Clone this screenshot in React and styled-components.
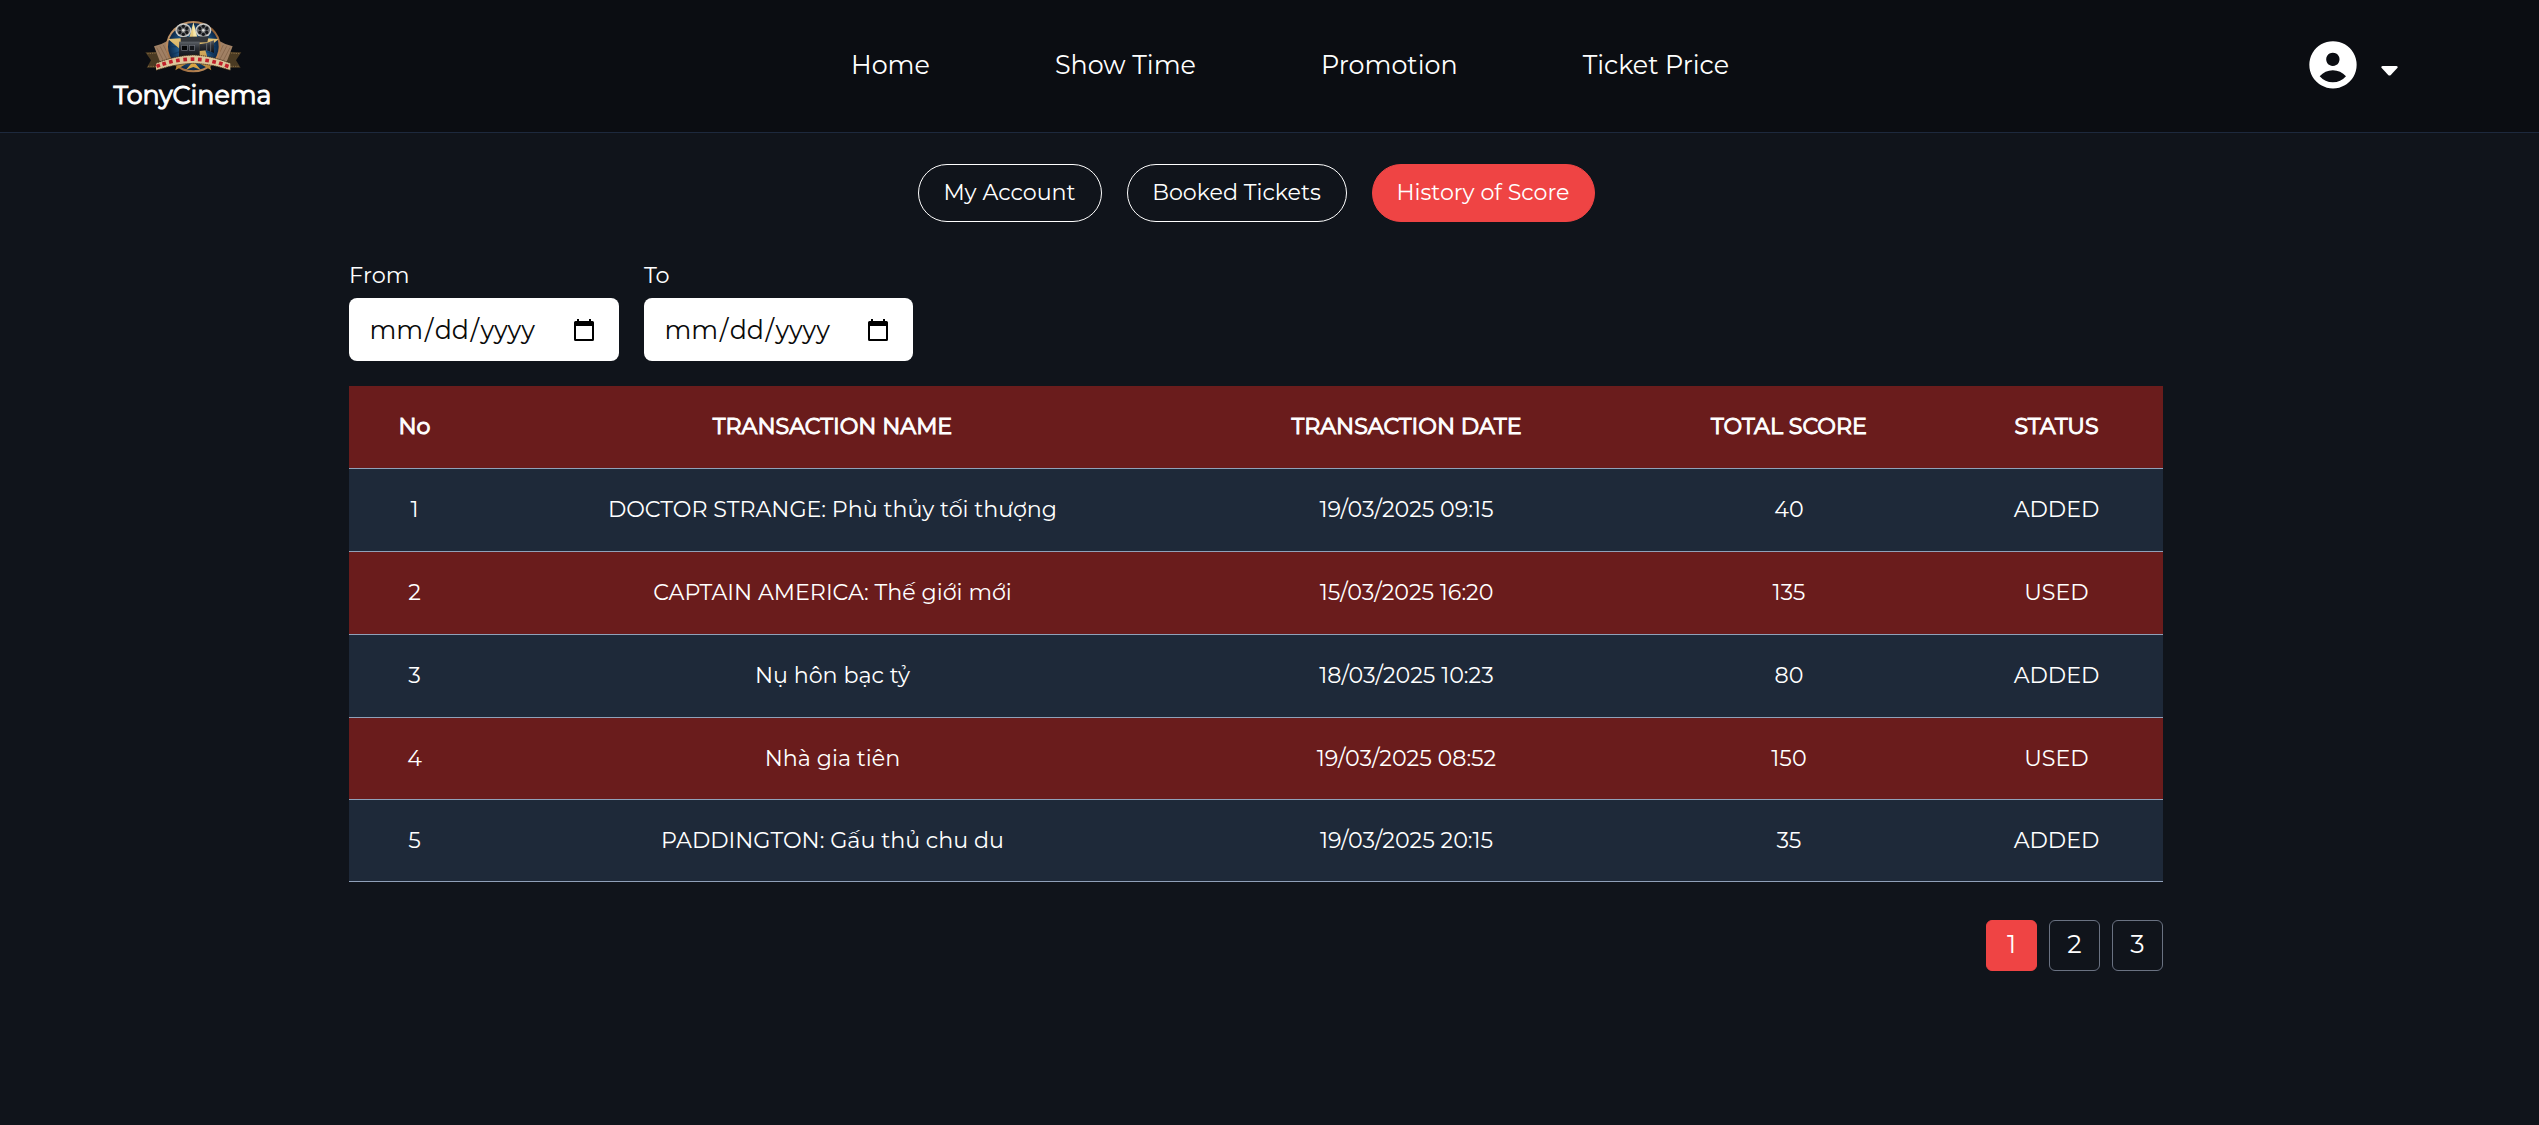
import React from 'react';
import styled, { createGlobalStyle, css } from 'styled-components';

const GlobalStyle = createGlobalStyle`
  *, *::before, *::after { box-sizing: border-box; }
  html, body, #root { height: 100%; }
  body {
    margin: 0;
    overflow: hidden;
    background: #10141b;
    color: #fff;
    font-family: Montserrat, Inter, "Noto Sans", sans-serif;
    font-weight: 400;
  }
  button { font: inherit; color: inherit; background: none; padding: 0; }
  h1 { margin: 0; }
`;

const emboldened = css`
  font-weight: 400;
  -webkit-text-stroke: 1px currentColor;
`;

const Page = styled.div`
  height: 100%;
  display: flex;
  flex-direction: column;
`;

const Header = styled.header`
  flex: none;
  height: 133px;
  padding: 0 141px 0 114px;
  display: flex;
  justify-content: space-between;
  background: #0b0d12;
  border-bottom: 1px solid #1d293d;
`;

const Brand = styled.div`
  width: 157px;
  padding-top: 15px;
  display: flex;
  flex-direction: column;
  align-items: center;
`;

const BrandName = styled.h1`
  ${emboldened}
  margin-top: 1px;
  font-size: 25.3px;
  line-height: 30px;
  white-space: nowrap;
`;

const Nav = styled.nav`
  width: 878px;
  display: flex;
  align-items: center;
  justify-content: space-between;
`;

const NavLink = styled.a`
  font-size: 25.4px;
  line-height: 36px;
  color: #fff;
  padding-bottom: 2px;
  white-space: nowrap;
`;

const UserMenu = styled.div`
  width: 89px;
  display: flex;
  justify-content: space-between;
  padding-top: 41px;
`;

const Caret = styled.svg`
  margin-top: 25px;
`;

const Main = styled.main`
  width: 1814px;
  margin-left: 349px;
  padding-top: 31px;
  display: flex;
  flex-direction: column;
`;

const Tabs = styled.div`
  display: flex;
  justify-content: center;
  gap: 25px;
`;

const Tab = styled.button`
  width: ${({ $width }) => $width}px;
  height: 58px;
  border-radius: 29px;
  border: 1px solid ${({ $active }) => ($active ? '#ef4444' : '#fff')};
  background: ${({ $active }) => ($active ? '#ef4444' : 'transparent')};
  font-size: 22.2px;
  line-height: 32px;
  white-space: nowrap;
`;

const Filters = styled.div`
  display: flex;
  gap: 25px;
  margin-top: 36px;
`;

const Field = styled.div`
  width: ${({ $width }) => $width}px;
`;

const Label = styled.label`
  display: block;
  height: 40px;
  font-size: 22.4px;
  line-height: 35px;
`;

const DateInput = styled.div`
  height: 63px;
  padding: 0 25px 0 19px;
  display: flex;
  align-items: center;
  justify-content: space-between;
  background: #fff;
  color: #0a0a0a;
  border-radius: 8px;
  font-size: 25.3px;
  line-height: 32px;
  font-weight: 400;
`;

const DatePart = styled.span`
  padding: 0 1.5px;
`;

const Table = styled.table`
  width: 1814px;
  margin-top: 25px;
  table-layout: fixed;
  border-collapse: separate;
  border-spacing: 0;
  font-size: 22.2px;
  line-height: 32px;
`;

const Row = styled.tr`
  height: ${({ $height }) => $height}px;
  background: ${({ $red }) => ($red ? '#6a1c1c' : '#1e2939')};
`;

const Cell = styled.td`
  padding: 0;
  text-align: center;
  vertical-align: middle;
  border-bottom: 1px solid #90a1b9;
`;

const HeadCell = styled(Cell).attrs({ as: 'th' })`
  ${emboldened}
`;

const Pagination = styled.div`
  margin-top: 38px;
  display: flex;
  justify-content: flex-end;
  gap: 12px;
`;

const PageButton = styled.button`
  width: 51px;
  height: 51px;
  border-radius: 6px;
  border: 1px solid ${({ $active }) => ($active ? '#ef4444' : '#6a7282')};
  background: ${({ $active }) => ($active ? '#ef4444' : 'transparent')};
  font-size: 25.3px;
  line-height: 34px;
  padding-bottom: 3px;
`;

const sprockets = [
  [54, 152, -20], [72, 146, -18], [92, 140, -14], [113, 136, -10], [135, 133, -5],
  [157, 132, 0], [179, 133, 5], [201, 136, 9], [222, 140, 14], [242, 145, 18], [260, 152, 20],
];

function Reel({ x }) {
  return (
    <g transform={`translate(${x} 46)`}>
      <ellipse rx="24" ry="21" fill="#cfcfcb" />
      <ellipse rx="20" ry="17" fill="#6c6e71" />
      {[0, 60, 120, 180, 240, 300].map((angle) => (
        <circle key={angle} r="5" cy="-12" transform={`rotate(${angle})`} fill="#15171a" />
      ))}
      <circle r="4" fill="#e0e0dc" />
    </g>
  );
}

function Emblem() {
  return (
    <svg width="106" height="64" viewBox="0 0 318 192">
      <defs>
        <radialGradient id="sky">
          <stop offset="0" stopColor="#4b96c6" />
          <stop offset="0.6" stopColor="#1f5888" />
          <stop offset="1" stopColor="#0b2747" />
        </radialGradient>
        <linearGradient id="rim" x1="0" y1="0" x2="1" y2="1">
          <stop offset="0" stopColor="#ddb184" />
          <stop offset="0.5" stopColor="#8d5c32" />
          <stop offset="1" stopColor="#d3a06a" />
        </linearGradient>
        <linearGradient id="gold" x1="0" y1="0" x2="0" y2="1">
          <stop offset="0" stopColor="#f7e39a" />
          <stop offset="1" stopColor="#b98332" />
        </linearGradient>
        <linearGradient id="metal" x1="0" y1="0" x2="0" y2="1">
          <stop offset="0" stopColor="#5d6268" />
          <stop offset="0.4" stopColor="#2c3036" />
          <stop offset="1" stopColor="#0e1116" />
        </linearGradient>
      </defs>
      <path d="M16 112L58 110L78 158L20 158L33 136Z" fill="#4a3a22" />
      <path d="M304 112L262 110L242 158L302 158L288 136Z" fill="#4a3a22" />
      <path d="M22 116L50 114M24 154L52 154M298 116L270 114M296 154L266 154" stroke="#a48351" strokeWidth="2" strokeDasharray="4 3" />
      <path d="M42 94Q62 90 82 78L96 130L60 140Z" fill="#a08064" />
      <path d="M278 94Q258 90 238 78L224 130L260 140Z" fill="#a08064" />
      <path d="M50 98L72 140M60 94L82 136M70 90L90 130M270 98L248 140M260 94L238 136M250 90L230 130" stroke="#7d5e44" strokeWidth="2" />
      <ellipse cx="160" cy="95" rx="82" ry="77" fill="url(#rim)" />
      <ellipse cx="160" cy="95" rx="76" ry="71" fill="url(#sky)" />
      <g stroke="#0d3157" strokeWidth="4" opacity="0.55">
        {[10, 30, 50, 70, 90, 110, 130, 150, 170].map((angle) => (
          <path key={angle} d="M160 26V164" transform={`rotate(${angle} 160 95)`} />
        ))}
      </g>
      <path d="M160 22L172 68L236 72L196 106L214 166L160 134L106 166L124 106L84 72L148 68Z" fill="url(#gold)" />
      <path d="M160 22L160 95L172 68Z" fill="#fff4bd" opacity="0.7" />
      <Reel x={130} />
      <Reel x={190} />
      <path d="M122 66L206 64L202 82L122 84Z" fill="#33373c" />
      <rect x="117" y="80" width="62" height="48" fill="url(#metal)" />
      <rect x="125" y="91" width="17" height="15" fill="#050608" stroke="#737780" strokeWidth="2" />
      <rect x="148" y="91" width="16" height="15" fill="#14171b" stroke="#737780" strokeWidth="2" />
      <path d="M178 88L200 84L222 76L222 114L200 106L178 108Z" fill="url(#metal)" />
      <path d="M200 85V106M212 81V110" stroke="#7d8289" strokeWidth="2" />
      <path d="M160 136L168 148L182 164L160 156L138 164L152 148Z" fill="#d7a342" />
      <path d="M48 145Q104 122 160 120Q216 122 271 145V166Q216 147 160 145Q104 147 48 166Z" fill="#dcc69a" />
      <path d="M48 145Q104 122 160 120Q216 122 271 145M48 166Q104 147 160 145Q216 147 271 166" fill="none" stroke="#49331c" strokeWidth="3" strokeDasharray="4 2" />
      {sprockets.map(([x, y, angle]) => (
        <rect key={x} x={x - 5} y={y - 5} width="11" height="11" fill="#c01f2a" transform={`rotate(${angle} ${x} ${y})`} />
      ))}
    </svg>
  );
}

function Avatar() {
  return (
    <svg width="48" height="48" viewBox="0 0 144 144">
      <path
        fill="#fff"
        fillRule="evenodd"
        d="M72 0.500A71 71 0 1 1 71.900 0.500ZM71.500 35A20 20 0 1 0 71.600 35ZM32 106Q48 88 71.500 88Q95 88 111 106Q95 124 71.500 124Q48 124 32 106Z"
      />
    </svg>
  );
}

function CalendarIcon() {
  return (
    <svg width="20" height="22" viewBox="0 0 20 22">
      <path
        fill="#000"
        fillRule="evenodd"
        d="M3 0H5V2H15V0H17V2H18.500Q20 2 20 3.500V20.500Q20 22 18.500 22H1.500Q0 22 0 20.500V3.500Q0 2 1.500 2H3ZM2 7V20H18V7Z"
      />
    </svg>
  );
}

const links = ['Home', 'Show Time', 'Promotion', 'Ticket Price'];
const tabs = [['My Account', 184], ['Booked Tickets', 220], ['History of Score', 223]];
const fields = [['From', 270], ['To', 269]];
const columns = [['No', 131], ['TRANSACTION NAME', 705], ['TRANSACTION DATE', 443], ['TOTAL SCORE', 322], ['STATUS', 213]];
const rows = [
  ['1', 'DOCTOR STRANGE: Phù thủy tối thượng', '19/03/2025 09:15', '40', 'ADDED'],
  ['2', 'CAPTAIN AMERICA: Thế giới mới', '15/03/2025 16:20', '135', 'USED'],
  ['3', 'Nụ hôn bạc tỷ', '18/03/2025 10:23', '80', 'ADDED'],
  ['4', 'Nhà gia tiên', '19/03/2025 08:52', '150', 'USED'],
  ['5', 'PADDINGTON: Gấu thủ chu du', '19/03/2025 20:15', '35', 'ADDED'],
];
const rowHeights = [83, 83, 83, 82, 82];

export default function App() {
  return (
    <Page>
      <GlobalStyle />
      <Header>
        <Brand>
          <Emblem />
          <BrandName>TonyCinema</BrandName>
        </Brand>
        <Nav>
          {links.map((label) => <NavLink key={label}>{label}</NavLink>)}
        </Nav>
        <UserMenu>
          <Avatar />
          <Caret width="17" height="10" viewBox="0 0 17 10">
            <path fill="#fff" d="M1.500 0H15.500Q17.500 0.500 16.300 2L9.800 9Q8.500 10 7.200 9L0.700 2Q-0.500 0.500 1.500 0Z" />
          </Caret>
        </UserMenu>
      </Header>
      <Main>
        <Tabs>
          {tabs.map(([label, width], i) => (
            <Tab key={label} $width={width} $active={i === 2}>{label}</Tab>
          ))}
        </Tabs>
        <Filters>
          {fields.map(([label, width]) => (
            <Field key={label} $width={width}>
              <Label>{label}</Label>
              <DateInput>
                <span>
                  <DatePart>mm</DatePart>/<DatePart>dd</DatePart>/<DatePart>yyyy</DatePart>
                </span>
                <CalendarIcon />
              </DateInput>
            </Field>
          ))}
        </Filters>
        <Table>
          <colgroup>
            {columns.map(([label, width]) => <col key={label} width={width} />)}
          </colgroup>
          <thead>
            <Row $red $height={83}>
              {columns.map(([label]) => <HeadCell key={label}>{label}</HeadCell>)}
            </Row>
          </thead>
          <tbody>
            {rows.map((cells, i) => (
              <Row key={cells[0]} $red={i % 2 === 1} $height={rowHeights[i]}>
                {cells.map((value, j) => <Cell key={j}>{value}</Cell>)}
              </Row>
            ))}
          </tbody>
        </Table>
        <Pagination>
          {[1, 2, 3].map((n) => <PageButton key={n} $active={n === 1}>{n}</PageButton>)}
        </Pagination>
      </Main>
    </Page>
  );
}
